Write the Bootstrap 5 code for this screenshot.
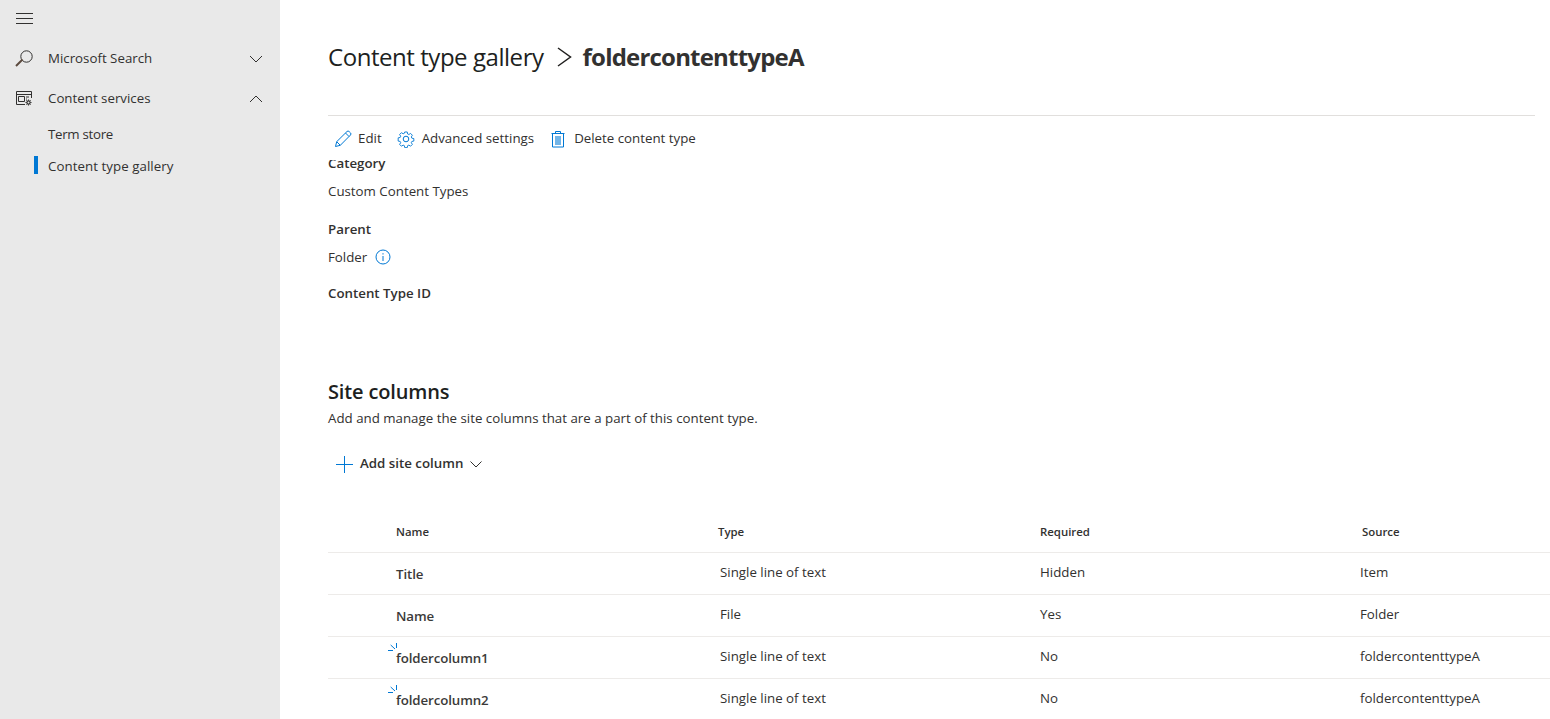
<!DOCTYPE html>
<html lang="en">
<head>
<meta charset="utf-8">
<title>Content type gallery</title>
<link href="https://cdn.jsdelivr.net/npm/bootstrap@5.3.0/dist/css/bootstrap.min.css" rel="stylesheet">
<style>
html,body{height:100%;overflow:hidden}
body{font-family:"Open Sans","Noto Sans",sans-serif;font-size:13.3px;color:#323130;background:#fff}
.shell{height:719px;width:1550px}
.side{width:280px;flex:none;background:#e9e9e9}
.burger{height:36px;padding-left:16px}
.navrow{height:40px;padding:0 17px 0 15px}
.navrow.first{margin-top:3px}
.navrow .lbl{margin-left:15px;flex:1}
.subrow{height:32px;padding-left:48px;position:relative}
.subrow.tight{letter-spacing:-.3px}
.subrow.on{letter-spacing:.05px}
.subrow.on::before{content:"";position:absolute;left:34px;top:5px;width:4px;height:18px;background:#0078d4}
.main{flex:1;min-width:0;padding-left:48px;overflow:hidden}
.crumbs{height:115px;padding-top:39px;border:0}
.crumbs .t1{font-size:24px;line-height:36px;color:#201f1e;letter-spacing:-.45px}
.crumbs .t2{font-size:24px;line-height:36px;font-weight:700;letter-spacing:-.8px}
.crumbs svg{margin:0 11px 0 12px}
.rule{height:1px;background:#e1dfdd;margin-right:15px}
.cmds{height:44px;padding:2px 0 0 6px}
.cmd{display:flex;align-items:center;margin-right:15px}
.cmd svg{margin-right:6px}
.cmd.gear svg{margin-right:7px}
.cmd.bin svg{margin-right:7px}
.clip{height:166px;overflow:hidden}
.fields{margin-top:-6px}
.flabel{font-weight:600;line-height:18px;margin-bottom:10px}
.fval{line-height:18px;margin-bottom:20px}
.fval.last{margin-bottom:18px}
.sect{margin-top:52px}
.sect h2{font-size:20px;font-weight:600;line-height:28px;margin:0;letter-spacing:-.15px;color:#201f1e}
.sect p{line-height:18px;margin:3px 0 0}
.addbtn{height:40px;margin-top:17px;padding-left:8px;font-weight:600}
.addbtn .plus{margin-right:7px}
.addbtn .caret-ic{margin-left:7px}
.grid-hd,.grid-rw{display:grid;grid-template-columns:68px 322px 322px 322px 1fr;align-items:center;border-bottom:1px solid #edebe9}
.grid-hd{height:42px;margin-top:27px;font-size:11.4px;font-weight:600;padding-top:1px}
.grid-rw{height:42px}
.grid-rw>span{padding-bottom:2px}
.grid-rw>.nm{font-weight:600;padding:3px 0 0;position:relative;letter-spacing:-.1px;color:#3b3a39}
.grid-rw .ty{padding-left:2px}
.grid-rw .sr{margin-left:-2px}
.spark{position:absolute;left:-8px;top:-3px}
</style>
</head>
<body>
<div class="shell d-flex">
  <nav class="side">
    <div class="burger d-flex align-items-center">
      <svg width="17" height="11" viewBox="0 0 17 11" fill="none" stroke="#323130"><path d="M0 .5h17M0 5.5h17M0 10.5h17"/></svg>
    </div>
    <div class="navrow first d-flex align-items-center">
      <svg width="18" height="18" viewBox="0 0 18 18" fill="none" stroke="#323130"><circle cx="11.500" cy="6.500" r="5.700"/><path d="M7.500 9.500L1 16" stroke="#5c4a3e" stroke-width="2"/></svg>
      <span class="lbl">Microsoft Search</span>
      <svg width="14" height="8" viewBox="0 0 14 8" fill="none" stroke="#323130"><path d="M1 1l6 6 6-6"/></svg>
    </div>
    <div class="navrow d-flex align-items-center">
      <svg width="18" height="18" viewBox="0 0 18 18" fill="none" stroke="#323130"><path d="M10 14.500H1.500V1.500h15V8M1.500 4.500h15"/><path d="M3.500 6.500h6v5h-6zM11 7h3M11 9h1"/><circle cx="13.500" cy="12.500" r="1.600" stroke-width="1.200"/><path d="M13.500 9.500v1.200M13.500 14.300v1.200M10.500 12.500h1.200M15.300 12.500h1.200M11.400 10.400l.8.8M14.800 13.800l.8.8M15.600 10.400l-.8.8M12.200 13.800l-.8.8"/></svg>
      <span class="lbl">Content services</span>
      <svg width="14" height="8" viewBox="0 0 14 8" fill="none" stroke="#323130"><path d="M1 7l6-6 6 6"/></svg>
    </div>
    <div class="subrow tight d-flex align-items-center">Term store</div>
    <div class="subrow on d-flex align-items-center">Content type gallery</div>
  </nav>
  <main class="main">
    <div class="crumbs d-flex align-items-start">
      <span class="t1">Content type gallery</span>
      <svg width="16" height="36" viewBox="0 0 16 36" fill="none" stroke="#201f1e" stroke-width="1.500"><path d="M2 9l12.500 9L2 27"/></svg>
      <span class="t2">foldercontenttypeA</span>
    </div>
    <div class="rule"></div>
    <div class="cmds d-flex align-items-center">
      <div class="cmd"><svg width="18" height="18" viewBox="0 0 18 18" fill="none" stroke="#0078d4"><path d="M1.500 16.500l1.200-4.800L13 1.500a1.500 1.500 0 0 1 2.100 0l1.400 1.400a1.500 1.500 0 0 1 0 2.100L6.300 15.300z M11.500 3l3.500 3.500M2.700 11.700l3.600 3.600"/></svg>Edit</div>
      <div class="cmd gear"><svg width="18" height="18" viewBox="0 0 18 18" fill="none" stroke="#0078d4"><circle cx="9" cy="9" r="2.800"/><path d="M7.600 1.200h2.800l.4 2.200 1.400.6 1.900-1.200 2 2-1.200 1.900.6 1.400 2.200.4v2.800l-2.200.4-.6 1.400 1.200 1.900-2 2-1.900-1.200-1.400.6-.4 2.200H7.600l-.4-2.200-1.400-.6-1.900 1.200-2-2 1.200-1.900-.6-1.400-2.200-.4V7.700l2.200-.4.6-1.400-1.200-1.900 2-2 1.900 1.200 1.400-.6z" transform="translate(.9 .9) scale(.9)"/></svg>Advanced settings</div>
      <div class="cmd bin"><svg width="18" height="18" viewBox="0 0 18 18" fill="none" stroke="#0078d4"><path d="M2.500 3.500h13M6.500 3.500v-2h5v2M3.500 3.500v13.500h11V3.500"/><rect x="6" y="6" width="6" height="9" fill="#0078d4" fill-opacity=".55" stroke="none"/></svg>Delete content type</div>
    </div>
    <div class="clip">
      <div class="fields">
        <div class="flabel">Category</div>
        <div class="fval">Custom Content Types</div>
        <div class="flabel">Parent</div>
        <div class="fval last d-flex align-items-center">Folder<svg class="ms-2" width="16" height="16" viewBox="0 0 16 16" fill="none" stroke="#0078d4"><circle cx="8" cy="8" r="7"/><path d="M8 7v5M8 4.200v1.300"/></svg></div>
        <div class="flabel">Content Type ID</div>
      </div>
    </div>
    <section class="sect">
      <h2>Site columns</h2>
      <p>Add and manage the site columns that are a part of this content type.</p>
      <div class="addbtn d-flex align-items-center">
        <svg class="plus" width="17" height="17" viewBox="0 0 17 17" fill="none" stroke="#0078d4"><path d="M8.500 0v17M0 8.500h17"/></svg>
        <span>Add site column</span>
        <svg class="caret-ic" width="12" height="7" viewBox="0 0 12 7" fill="none" stroke="#323130"><path d="M.5.500L6 6 11.500.500"/></svg>
      </div>
    </section>
    <div class="grid-hd"><span></span><span>Name</span><span>Type</span><span>Required</span><span>Source</span></div>
    <div class="grid-rw"><span></span><span class="nm">Title</span><span class="ty">Single line of text</span><span>Hidden</span><span class="sr">Item</span></div>
    <div class="grid-rw"><span></span><span class="nm">Name</span><span class="ty">File</span><span>Yes</span><span class="sr">Folder</span></div>
    <div class="grid-rw"><span></span><span class="nm"><svg class="spark" width="9" height="9" viewBox="0 0 9 9" fill="none" stroke="#0078d4"><path d="M0 7.500h5M2.700 2l4.300 4M8.500 0v5"/></svg>foldercolumn1</span><span class="ty">Single line of text</span><span>No</span><span class="sr">foldercontenttypeA</span></div>
    <div class="grid-rw"><span></span><span class="nm"><svg class="spark" width="9" height="9" viewBox="0 0 9 9" fill="none" stroke="#0078d4"><path d="M0 7.500h5M2.700 2l4.300 4M8.500 0v5"/></svg>foldercolumn2</span><span class="ty">Single line of text</span><span>No</span><span class="sr">foldercontenttypeA</span></div>
  </main>
</div>
<script src="https://cdn.jsdelivr.net/npm/bootstrap@5.3.0/dist/js/bootstrap.bundle.min.js"></script>
</body>
</html>
